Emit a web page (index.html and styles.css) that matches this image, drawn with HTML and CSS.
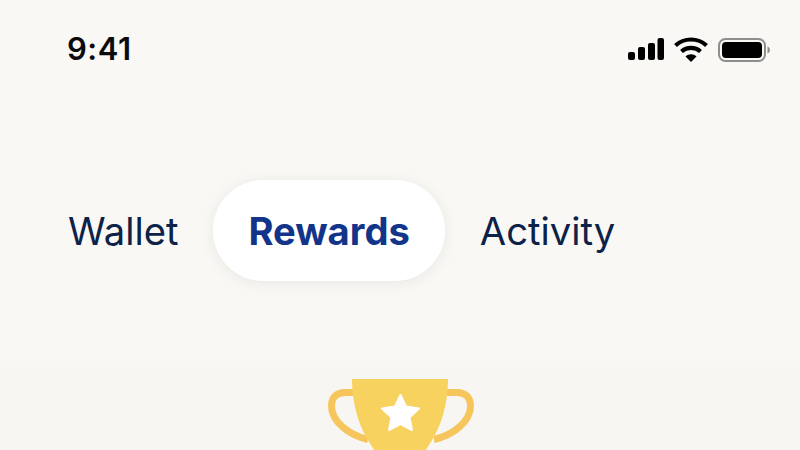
FILE: index.html
```html
<!DOCTYPE html>
<html lang="en">
<head>
<meta charset="utf-8">
<title>Rewards</title>
<link rel="stylesheet" href="styles.css">
</head>
<body>
<div class="screen">
  <header class="status">
    <span class="time">9:41</span>
    <div class="status-icons">
      <svg class="signal" width="36" height="24" viewBox="0 0 36 24"><rect x="0" y="14" width="7" height="8" rx="2"/><rect x="10" y="9" width="7" height="13" rx="2"/><rect x="20" y="5" width="7" height="17" rx="2"/><rect x="29.500" y="0" width="6.500" height="22" rx="2"/></svg>
      <svg class="wifi" width="34" height="26" viewBox="0 0 34 26"><path d="M1.500 8.500C10 0.500 24 0.500 32.500 8.500" fill="none" stroke="#000" stroke-width="4.200"/><path d="M7.500 14.500C12.800 9.700 21.200 9.700 26.500 14.500" fill="none" stroke="#000" stroke-width="4.200"/><path d="M11.500 19.500C14.500 16.600 19.500 16.600 22.500 19.500L17 25Z"/></svg>
      <svg class="battery" width="52" height="26" viewBox="0 0 52 26"><rect x="1" y="2" width="46" height="22" rx="6.500" fill="none" stroke="#8e8e8c" stroke-width="2"/><rect x="4" y="5" width="40" height="16" rx="4"/><path d="M49.500 9.500C51 10 52 11.500 52 13C52 14.500 51 16 49.500 16.500Z" fill="#8e8e8c"/></svg>
    </div>
  </header>
  <nav class="tabs">
    <span class="tab">Wallet</span>
    <span class="tab tab-active">Rewards</span>
    <span class="tab">Activity</span>
  </nav>
  <section class="hero">
    <svg class="trophy" width="146" height="72" viewBox="0 0 146 72">
      <path d="M27 13.500H17C8 13.500 3.500 19 3.500 27C3.500 42 20 56 40 60.500" fill="none" stroke="#f6c55b" stroke-width="7"/>
      <path d="M119 13.500H129C138 13.500 142.500 19 142.500 27C142.500 42 126 56 106 60.500" fill="none" stroke="#f6c55b" stroke-width="7"/>
      <path d="M24 0H120C120 12 118.500 24 115 36C111 50 104 62 97 72H47C40 62 33 50 29 36C25.500 24 24 12 24 0Z" fill="#f8d25f"/>
      <path d="M72.500 16L78 27.500L91 29.500L81.500 38.500L84 51L72.500 45L61 51L63.500 38.500L54 29.500L67 27.500Z" fill="#fff" stroke="#fff" stroke-width="2" stroke-linejoin="round"/>
    </svg>
  </section>
</div>
</body>
</html>
```
FILE: styles.css
```css
* { box-sizing: border-box; }
html, body { margin: 0; padding: 0; }
body { width: 800px; height: 450px; overflow: hidden; background: #f9f8f5; }
.screen {
  width: 800px;
  height: 450px;
  display: flex;
  flex-direction: column;
  overflow: hidden;
  font-family: Inter, "Liberation Sans", sans-serif;
}
.status {
  height: 100px;
  padding: 28px 30px 0 67px;
  display: flex;
  justify-content: space-between;
  align-items: flex-start;
  flex: none;
}
.time { font-size: 31px; line-height: 42px; font-weight: 600; color: #0b0b0b; letter-spacing: 0.500px; }
.status-icons { display: flex; align-items: center; gap: 10px; padding-top: 9px; }
.signal, .wifi, .battery { display: block; fill: #000; }
.tabs {
  margin-top: 80px;
  height: 101px;
  padding-left: 33px;
  display: flex;
  align-items: stretch;
  flex: none;
}
.tab {
  padding: 0 35px;
  display: flex;
  align-items: center;
  font-size: 38.200px;
  color: #0c2248;
}
.tab-active {
  background: #fff;
  border-radius: 50px;
  color: #12358a;
  font-weight: 700;
  box-shadow: 0 2px 14px rgba(40, 40, 30, 0.08);
}
.hero {
  margin-top: 74px;
  padding-top: 24px;
  flex: 1;
  min-height: 0;
  display: flex;
  justify-content: center;
  background-image: linear-gradient(#f9f8f5, #f8f6f2 24px);
}
.trophy { display: block; flex: none; margin-left: 2px; }
```
